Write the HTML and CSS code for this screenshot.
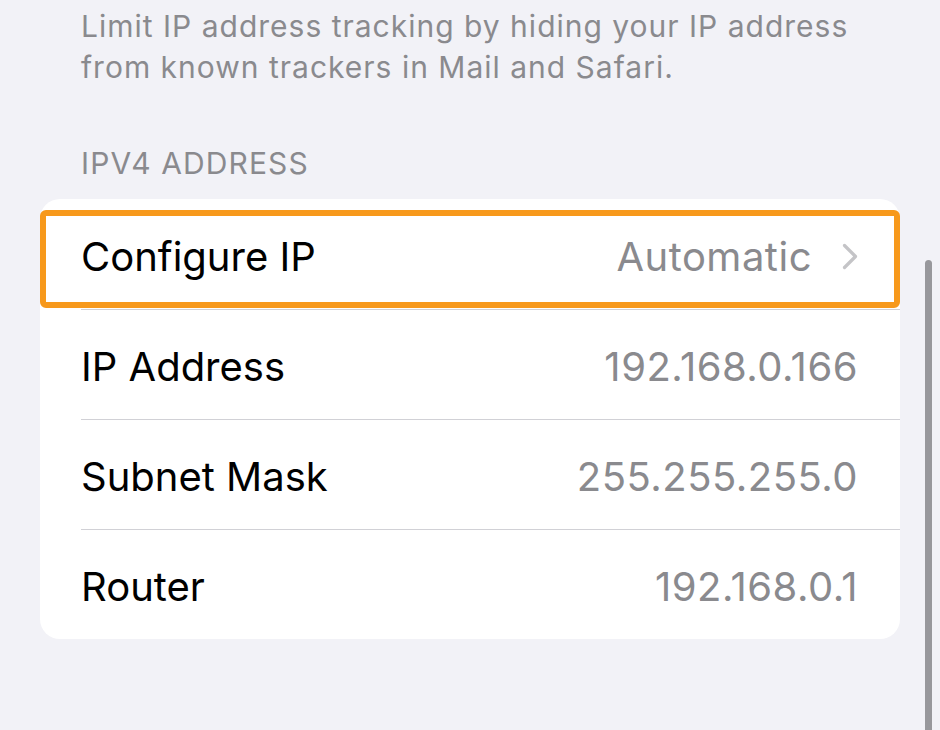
FILE: index.html
```html
<!DOCTYPE html>
<html lang="en">
<head>
    <meta charset="UTF-8">
    <meta name="viewport" content="width=device-width, initial-scale=1.0">
    <title>Wi-Fi - IPv4 Address</title>
    <link rel="stylesheet" href="styles.css">
</head>
<body>
    <div class="page">
        <p class="group-footer">Limit IP address tracking by hiding your IP address from known trackers in Mail and Safari.</p>

        <h2 class="group-header">IPV4 ADDRESS</h2>
        <div class="group">
            <div class="row row-link">
                <span class="label">Configure IP</span>
                <span class="value">Automatic</span>
                <svg class="chevron" width="16" height="27" viewBox="0 0 16 27">
                    <path d="M2.5 2.5 L13.5 13.5 L2.5 24.5" fill="none" stroke="#c4c4c7" stroke-width="3.2" stroke-linecap="round" stroke-linejoin="round"/>
                </svg>
                <div class="highlight"></div>
            </div>
            <div class="row">
                <span class="label">IP Address</span>
                <span class="value">192.168.0.166</span>
            </div>
            <div class="row">
                <span class="label">Subnet Mask</span>
                <span class="value">255.255.255.0</span>
            </div>
            <div class="row">
                <span class="label">Router</span>
                <span class="value">192.168.0.1</span>
            </div>
        </div>
    </div>

    <div class="scroll-indicator"></div>
</body>
</html>
```

FILE: styles.css
```css
body {
    font-family: Inter, "Noto Sans", sans-serif;
    background-color: #f2f2f7;
    margin: 0;
    padding: 0;
    height: 730px;
    overflow: hidden;
    position: relative;
}

.page {
    padding: 0 40px;
}

.group-footer {
    margin: 0;
    padding: 6px 20px 0 41px;
    font-size: 30px;
    line-height: 41px;
    letter-spacing: 1px;
    color: #8a8a8e;
}

.group-header {
    margin: 0;
    padding: 57px 41px 18px;
    font-size: 30px;
    font-weight: 400;
    line-height: 36px;
    letter-spacing: 1.1px;
    color: #8a8a8e;
}

.group {
    background-color: #fff;
    border-radius: 20px;
}

.row {
    height: 110px;
    box-sizing: border-box;
    display: flex;
    align-items: center;
    padding: 4px 42px 0 41px;
    position: relative;
}
.row + .row::before {
    content: "";
    position: absolute;
    top: 0;
    left: 41px;
    right: 0;
    border-top: 1px solid #d1d1d6;
}

.label {
    font-size: 40px;
    color: #000;
    flex: 1;
}

.value {
    font-size: 40px;
    color: #8a8a8e;
    letter-spacing: 0.5px;
}

.row-link .value { margin-right: 30px; }
.chevron { display: block; }

.highlight {
    position: absolute;
    top: 11px;
    bottom: 1px;
    left: 0;
    right: 0;
    border: 6px solid #f7991c;
    border-radius: 6px;
}

.scroll-indicator {
    position: absolute;
    top: 260px;
    bottom: 0;
    left: 925px;
    width: 7px;
    background-color: #98989c;
    border-radius: 4px 4px 0 0;
}
```
